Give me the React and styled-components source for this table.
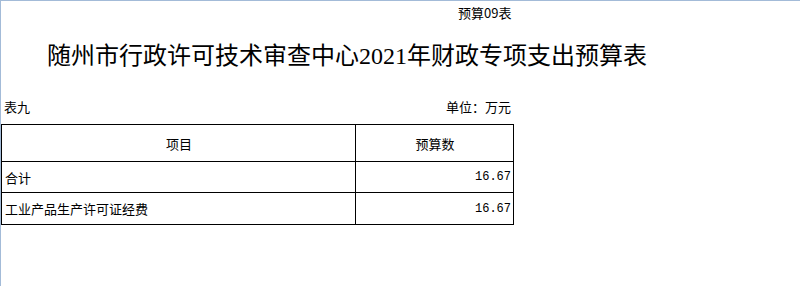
import React from "react";
import styled, { createGlobalStyle } from "styled-components";

const Global = createGlobalStyle`
  html, body { margin: 0; padding: 0; background: #fff; }
  body { font-family: "Noto Sans CJK SC", "Noto Sans", sans-serif; color: #000; }
`;

const Page = styled.div`
  box-sizing: border-box;
  width: 800px;
  height: 286px;
  border-top: 1px solid #a3bbd8;
  border-left: 1px solid #a3bbd8;
  overflow: hidden;
`;

const TopNote = styled.div`
  height: 24px;
  line-height: 24px;
  padding-left: 457px;
  font-size: 13px;
`;

const Title = styled.h1`
  margin: 0;
  height: 62px;
  line-height: 62px;
  padding-left: 46px;
  font-family: "Liberation Serif", "Noto Sans CJK SC", serif;
  font-size: 24px;
  font-weight: 400;
  white-space: nowrap;
`;

const MetaRow = styled.div`
  box-sizing: border-box;
  width: 512px;
  height: 37px;
  display: flex;
  justify-content: space-between;
  align-items: flex-end;
  padding: 0 2px 9px 3px;
  font-size: 13px;
  line-height: 16px;
`;

const Table = styled.table`
  border-collapse: collapse;
  table-layout: fixed;
  width: 513px;
  font-size: 13px;
`;

const Cell = styled.td`
  border: 1px solid #000;
  padding: 0 2px 0 3px;
  height: ${(p) => p.$h}px;
  text-align: ${(p) => p.$align || "left"};
  white-space: nowrap;
  font-family: ${(p) =>
    p.$mono ? '"Liberation Mono", monospace' : '"Noto Sans CJK SC", sans-serif'};
  font-size: ${(p) => (p.$mono ? "12px" : "13px")};
`;

const rows = [
  { name: "合计", value: "16.67", h: 30 },
  { name: "工业产品生产许可证经费", value: "16.67", h: 31 },
];

export default function App() {
  return (
    <>
      <Global />
      <Page>
        <TopNote>预算09表</TopNote>
        <Title>随州市行政许可技术审查中心2021年财政专项支出预算表</Title>
        <MetaRow>
          <span>表九</span>
          <span>单位：万元</span>
        </MetaRow>
        <Table>
          <colgroup>
            <col style={{ width: 354 }} />
            <col style={{ width: 158 }} />
          </colgroup>
          <tbody>
            <tr>
              <Cell $h={36} $align="center">项目</Cell>
              <Cell $h={36} $align="center">预算数</Cell>
            </tr>
            {rows.map((r) => (
              <tr key={r.name}>
                <Cell $h={r.h}>{r.name}</Cell>
                <Cell $h={r.h} $align="right" $mono>
                  {r.value}
                </Cell>
              </tr>
            ))}
          </tbody>
        </Table>
      </Page>
    </>
  );
}
